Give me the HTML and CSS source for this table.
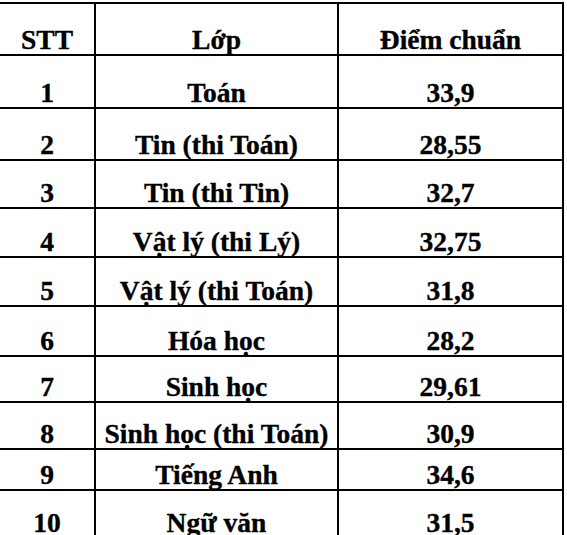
FILE: index.html
```html
<!DOCTYPE html>
<html lang="vi">
<head>
<meta charset="utf-8">
<title>Điểm chuẩn</title>
<link rel="stylesheet" href="styles.css">
</head>
<body>
<div class="sheet">
  <div class="row h52"><div class="c c1">STT</div><div class="c c2">Lớp</div><div class="c c3">Điểm chuẩn</div></div>
  <div class="row h53"><div class="c c1">1</div><div class="c c2">Toán</div><div class="c c3">33,9</div></div>
  <div class="row h52"><div class="c c1">2</div><div class="c c2">Tin (thi Toán)</div><div class="c c3">28,55</div></div>
  <div class="row h48"><div class="c c1">3</div><div class="c c2">Tin (thi Tin)</div><div class="c c3">32,7</div></div>
  <div class="row h49"><div class="c c1">4</div><div class="c c2">Vật lý (thi Lý)</div><div class="c c3">32,75</div></div>
  <div class="row h49"><div class="c c1">5</div><div class="c c2">Vật lý (thi Toán)</div><div class="c c3">31,8</div></div>
  <div class="row h50"><div class="c c1">6</div><div class="c c2">Hóa học</div><div class="c c3">28,2</div></div>
  <div class="row h46"><div class="c c1">7</div><div class="c c2">Sinh học</div><div class="c c3">29,61</div></div>
  <div class="row h47"><div class="c c1">8</div><div class="c c2">Sinh học (thi Toán)</div><div class="c c3">30,9</div></div>
  <div class="row h41"><div class="c c1">9</div><div class="c c2">Tiếng Anh</div><div class="c c3">34,6</div></div>
  <div class="row h48"><div class="c c1">10</div><div class="c c2">Ngữ văn</div><div class="c c3">31,5</div></div>
</div>
</body>
</html>
```
FILE: styles.css
```css
html, body {
  margin: 0;
  padding: 0;
  background: #ffffff;
  overflow: hidden;
}
body {
  font-family: "Liberation Serif", "Times New Roman", serif;
  font-weight: bold;
  font-size: 27.5px;
  color: #000;
  padding-top: 2px;
}
.sheet {
  width: 564px;
  border-top: 2px solid #000;
}
.row {
  display: flex;
  box-sizing: border-box;
  border-bottom: 2px solid #000;
}
.h41 { height: 41px; }
.h46 { height: 46px; }
.h47 { height: 47px; }
.h48 { height: 48px; }
.h49 { height: 49px; }
.h50 { height: 50px; }
.h52 { height: 52px; }
.h53 { height: 53px; }
.c {
  box-sizing: border-box;
  display: flex;
  align-items: flex-end;
  justify-content: center;
  border-right: 2px solid #000;
  line-height: 1;
  padding-bottom: 1px;
  white-space: nowrap;
  -webkit-text-stroke: 0.35px #000;
}
.c1 { width: 96px; }
.c2 { width: 243px; }
.c3 { width: 225px; }
```
